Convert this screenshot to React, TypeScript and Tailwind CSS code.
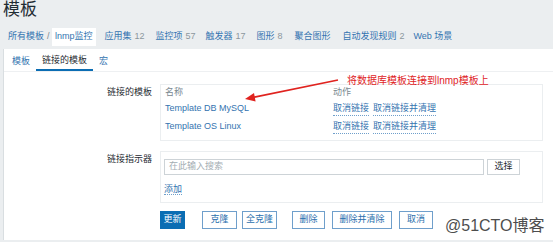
const font = "font-['Liberation_Sans','Noto_Sans_CJK_SC',sans-serif]";

const navItems = [
  { label: "应用集", count: "12", w: "w-[51px]" },
  { label: "监控项", count: "57", w: "w-[50px]" },
  { label: "触发器", count: "17", w: "w-[51px]" },
  { label: "图形", count: "8", w: "w-[38px]" },
  { label: "聚合图形", count: "", w: "w-[48px]" },
  { label: "自动发现规则", count: "2", w: "w-[71px]" },
  { label: "Web 场景", count: "", w: "w-[50px]" },
];

const linked = ["Template DB MySQL", "Template OS Linux"];

const secondary = "border-[#6f9fcb] bg-white text-[#2a6fad]";
const buttons = [
  { label: "更新", cls: "ml-0 w-[25px] border-[#0b6db3] bg-[#0b6db3] text-white" },
  { label: "克隆", cls: `ml-[17px] w-[35px] ${secondary}` },
  { label: "全克隆", cls: `ml-[5px] w-[35px] ${secondary}` },
  { label: "删除", cls: `ml-[15px] w-[33px] ${secondary}` },
  { label: "删除并清除", cls: `ml-[7px] w-[60px] ${secondary}` },
  { label: "取消", cls: `ml-[7px] w-[34px] ${secondary}` },
];

export default function App() {
  return (
    <div className={`relative w-[553px] h-[242px] overflow-hidden bg-[#ebeef0] text-[9px] text-[#1f2c33] ${font}`}>
      <h1 className="h-[20px] pl-[3px] text-[17px] leading-[20px] text-[#1f2c33]">模板</h1>

      {/* breadcrumb + sub nav */}
      <nav className="mt-[8px] flex h-[18px] items-center pl-[8px] text-[#3474b0]">
        <span className="w-[36px]">所有模板</span>
        <span className="w-[8px] pl-[3px] text-[#7a8890]">/</span>
        <span className="flex h-[18px] items-center bg-white px-[3px]">lnmp监控</span>
        <div className="ml-[9px] flex">
          {navItems.map((n) => (
            <span key={n.label} className={`${n.w} whitespace-nowrap`}>
              {n.label}
              {n.count && <span className="ml-[3px] text-[#8b979e]">{n.count}</span>}
            </span>
          ))}
        </div>
      </nav>

      {/* panel */}
      <div className="ml-[3px] mt-[3px] h-[191px] border-l border-[#d9dee1] bg-white">
        <div className="flex h-[23px] border-b border-[#eef0f2] pl-[2px] text-[#3474b0]">
          <span className="flex h-[22px] items-center px-[6px] pt-[4px]">模板</span>
          <span className="flex h-[22px] items-center border-b-2 border-[#0b6db3] px-[6px] pt-[4px] text-[#1f2c33]">
            链接的模板
          </span>
          <span className="flex h-[22px] items-center px-[6px] pt-[4px]">宏</span>
        </div>

        {/* linked templates */}
        <div className="mt-[12px] flex">
          <div className="w-[149px] pr-[1px] text-right leading-[16px]">链接的模板</div>
          <div className="ml-[7px] w-[383px] border border-[#ebeef0] pb-[5px] pl-[4px]">
            <div className="flex h-[16px] items-center text-[#7a8890]">
              <span className="w-[168px]">名称</span>
              <span>动作</span>
            </div>
            {linked.map((t, i) => (
              <div key={t} className={`flex h-[16px] items-center ${i ? "mt-[2px]" : ""}`}>
                <span className="w-[168px] text-[#3474b0]">{t}</span>
                <span className="border-b border-dotted border-[#6f9fcb] text-[#3474b0]">取消链接</span>
                <span className="ml-[4px] border-b border-dotted border-[#6f9fcb] text-[#3474b0]">取消链接并清理</span>
              </div>
            ))}
          </div>
        </div>

        {/* linked indicator */}
        <div className="mt-[10px] flex">
          <div className="w-[149px] pr-[1px] text-right leading-[16px]">链接指示器</div>
          <div className="ml-[7px] w-[383px] border border-[#ebeef0] pb-[5px] pl-[3px] pt-[7px]">
            <div className="flex items-center">
              <div className="flex h-[16px] w-[320px] items-center border border-[#cdd3d7] pl-[4px] text-[#a3adb3]">
                在此输入搜索
              </div>
              <button className="ml-[3px] h-[16px] w-[33px] border border-[#cdd3d7] bg-white text-[#1f2c33]">选择</button>
            </div>
            <div className="mt-[6px] h-[16px] leading-[16px]">
              <span className="border-b border-dotted border-[#6f9fcb] text-[#3474b0]">添加</span>
            </div>
          </div>
        </div>

        {/* actions */}
        <div className="mt-[8px] flex pl-[156px]">
          {buttons.map((b) => (
            <button key={b.label} className={`h-[18px] border text-[9px] ${b.cls}`}>
              {b.label}
            </button>
          ))}
        </div>
      </div>

      {/* annotation */}
      <svg className="pointer-events-none absolute left-0 top-0" width="553" height="242">
        <line x1="338" y1="80" x2="252" y2="97.6" stroke="#e0231f" strokeWidth="1.6" />
        <polygon points="245,99 255.6,101.5 254,93" fill="#e0231f" />
      </svg>
      <span className="absolute left-[347px] top-[74px] text-[10px] leading-[14px] text-[#e0231f]">
        将数据库模板连接到lnmp模板上
      </span>
      <span className="absolute left-[445px] top-[217px] text-[16px] leading-[18px] text-[#4d4d4d]">@51CTO博客</span>
    </div>
  );
}
